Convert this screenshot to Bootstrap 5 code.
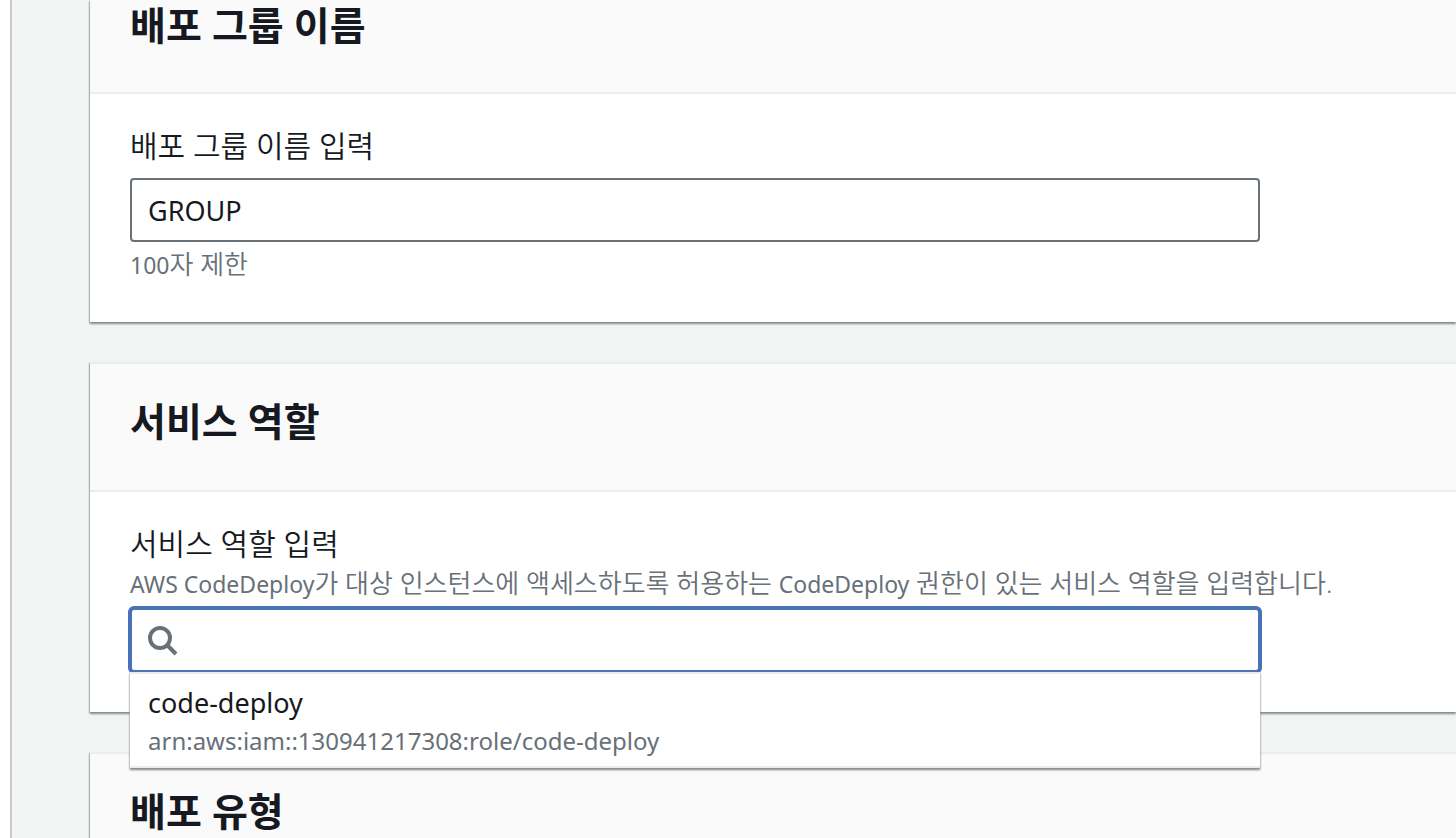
<!DOCTYPE html>
<html lang="ko">
<head>
<meta charset="utf-8">
<meta name="viewport" content="width=device-width, initial-scale=1">
<title>배포 그룹 생성</title>
<link href="https://cdn.jsdelivr.net/npm/bootstrap@5.3.0/dist/css/bootstrap.min.css" rel="stylesheet">
<style>
  body { font-family: "Noto Sans", "Noto Sans CJK KR", sans-serif; color: #16191f; background: #fff; }
  .page-main { margin-left: 10px; padding-left: 78px; background: #f2f4f3; border-left: 2px solid #c6cacd; }
  .panel { border: 0; border-radius: 0; margin-bottom: 40px; color: inherit; border-top: 2px solid #eaeded; box-shadow: 0 2px 2px #868c91, -1px 1px 1px #c0c4c7; }
  .panel-first { border-top: 0; }
  .panel > .card-header { background: #fafafa; border-bottom: 2px solid #eaeded; border-radius: 0; padding: 30px 40px 42px; }
  .panel-first > .card-header { padding-top: 0; }
  .panel > .card-body { padding: 32px 40px 40px; }
  .panel h2 { font-size: 39px; line-height: 54px; font-weight: 700; margin: 0; }
  .panel-first h2 { line-height: 50px; }
  .field-label { display: block; font-size: 30px; line-height: 40px; font-weight: 350; margin: 0; }
  .field-hint { font-size: 26px; line-height: 38px; font-weight: 350; color: #687078; margin: 0; white-space: nowrap; }
  .field-note { padding-top: 3px; margin-bottom: -2px; }
  .latin { font-size: 23px; font-weight: 400; }
  .field-box { max-width: 1130px; margin-top: 12px; }
  .field-hint + .field-box { margin-top: 5px; }
  .field-box .form-control { height: 64px; padding: 0 16px; border: 2px solid #687078; border-radius: 4px; font-size: 27px; color: #16191f; box-shadow: none; }
  .field-box .search-input { padding-left: 60px; border-color: #4a72b8; box-shadow: 0 0 0 2px #4a72b8; }
  .search-icon { left: 17px; top: 17px; width: 32px; height: 32px; pointer-events: none; }
  .role-menu { width: 100%; top: 64px; border: 0; border-radius: 0; border-top: 2px solid #eaeded; border-bottom: 2px solid #eaeded; padding: 10px 0 6px; box-shadow: 0 2px 2px #868c91, 0 1px 2px #aab0b4; }
  .role-menu .dropdown-item { padding: 0 18px; color: #16191f; }
  .role-name { font-size: 27px; line-height: 38px; }
  .role-arn { font-size: 24px; line-height: 38px; color: #687078; }
</style>
</head>
<body class="overflow-hidden vh-100">
<main class="page-main min-vh-100">
  <section class="card panel panel-first">
    <div class="card-header"><h2>배포 그룹 이름</h2></div>
    <div class="card-body">
      <label class="field-label" for="groupName">배포 그룹 이름 입력</label>
      <div class="field-box"><input class="form-control" type="text" id="groupName" value="GROUP" maxlength="100" aria-describedby="groupHint"></div>
      <p class="field-hint field-note" id="groupHint"><span class="latin">100</span>자 제한</p>
    </div>
  </section>
  <section class="card panel">
    <div class="card-header"><h2>서비스 역할</h2></div>
    <div class="card-body">
      <label class="field-label" for="serviceRole">서비스 역할 입력</label>
      <p class="field-hint" id="roleHint"><span class="latin">AWS CodeDeploy</span>가 대상 인스턴스에 액세스하도록 허용하는 <span class="latin">CodeDeploy</span> 권한이 있는 서비스 역할을 입력합니다.</p>
      <div class="field-box dropdown">
        <input class="form-control search-input" type="text" id="serviceRole" aria-describedby="roleHint" autocomplete="off">
        <svg class="search-icon position-absolute" viewBox="0 0 32 32" fill="none" stroke="#687078" stroke-width="4" aria-hidden="true"><circle cx="13" cy="13" r="10"/><path d="M20 20l9 9"/></svg>
        <div class="dropdown-menu role-menu show">
          <a class="dropdown-item" href="#"><span class="role-name d-block">code-deploy</span><span class="role-arn d-block">arn:aws:iam::130941217308:role/code-deploy</span></a>
        </div>
      </div>
    </div>
  </section>
  <section class="card panel mb-0">
    <div class="card-header"><h2>배포 유형</h2></div>
  </section>
</main>
<script src="https://cdn.jsdelivr.net/npm/bootstrap@5.3.0/dist/js/bootstrap.bundle.min.js"></script>
</body>
</html>
